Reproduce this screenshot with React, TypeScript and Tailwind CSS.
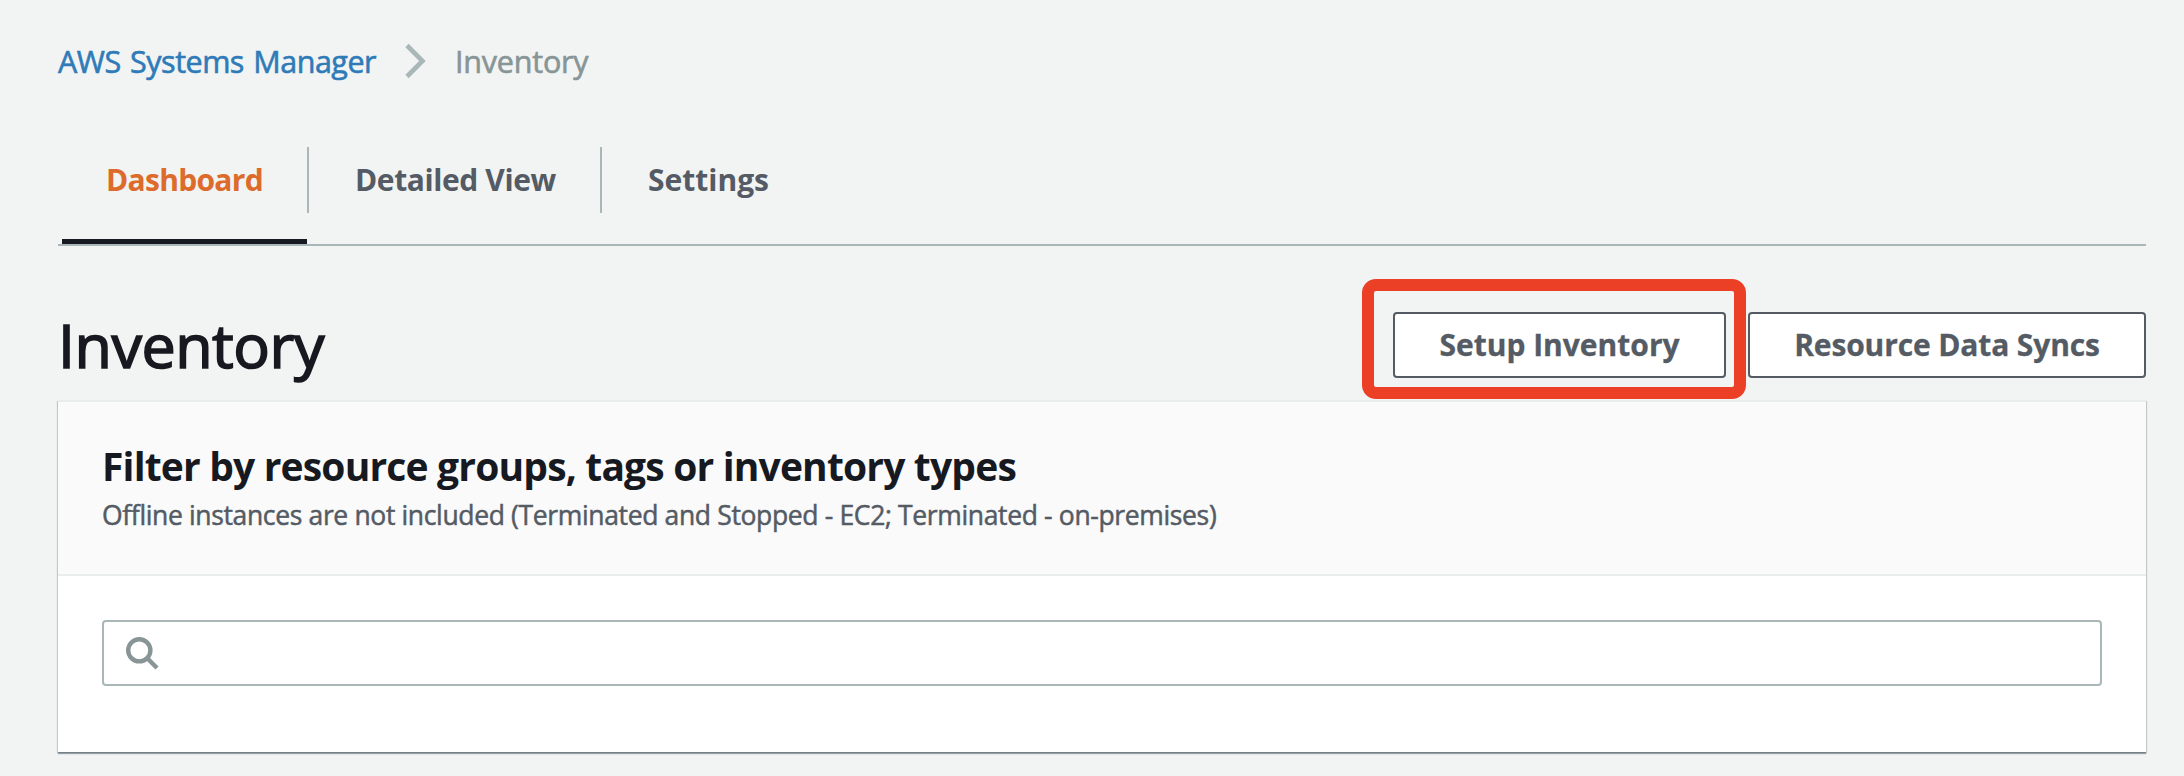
import React from "react";

type Tab = { label: string; tracking: string; box: string; active?: boolean };

const tabs: Tab[] = [
  { label: "Dashboard", tracking: "tracking-[-0.7px]", box: "w-[247px] pl-[44px] border-r-2", active: true },
  { label: "Detailed View", tracking: "tracking-[-0.4px]", box: "w-[293px] pl-[46px] border-r-2" },
  { label: "Settings", tracking: "tracking-normal", box: "w-[200px] pl-[46px]" },
];

function Breadcrumbs() {
  return (
    <nav className="flex h-10 items-center text-[30.5px] leading-10 [-webkit-text-stroke-width:0.6px]">
      <a className="w-[347px] tracking-[-0.5px] text-[#2e7bb8] [word-spacing:2px]">AWS Systems Manager</a>
      <svg className="h-9 w-[22px]" viewBox="0 0 22 36" fill="none">
        <path d="M2 2.5 17.5 18 2 33.5" stroke="#aab7b8" strokeWidth="4.6" />
      </svg>
      <span className="ml-7 tracking-[-0.2px] text-[#879596]">Inventory</span>
    </nav>
  );
}

function TabBar() {
  return (
    <div className="mt-[66px] flex h-[99px] border-b-2 border-[#aab7b8] pl-1">
      {tabs.map((t) => (
        <div key={t.label} className="flex flex-col justify-between">
          <div
            className={`flex h-[66px] items-center border-[#aab7b8] pb-0.5 text-[30px] font-bold whitespace-nowrap ${t.box} ${t.tracking} ${t.active ? "text-[#dd6b2b]" : "text-[#545b64]"}`}
          >
            {t.label}
          </div>
          {t.active && <div className="mr-0.5 h-[5px] bg-[#16191f]" />}
        </div>
      ))}
    </div>
  );
}

const buttonClass =
  "flex h-[66px] items-center justify-center rounded-[4px] border-2 border-[#545b64] bg-white pb-px text-[30px] font-bold whitespace-nowrap text-[#545b64] [-webkit-text-stroke-width:0.3px]";

function SearchIcon() {
  return (
    <svg className="h-9 w-9" viewBox="0 0 36 36" fill="none" stroke="#879596">
      <circle cx="15.3" cy="15.3" r="11.1" strokeWidth="4.4" />
      <path d="M23 23 33 33" strokeWidth="4.4" />
    </svg>
  );
}

export default function App() {
  return (
    <main className="h-[776px] overflow-hidden bg-[#f2f3f3] pt-[41px] pr-[38px] pl-[58px] font-['Open_Sans',sans-serif]">
      <Breadcrumbs />
      <TabBar />
      <header className="mt-[66px] mb-[22px] flex h-[66px] items-center justify-between">
        <h1 className="text-[61px] leading-[66px] tracking-[-0.5px] text-[#16191f] [-webkit-text-stroke-width:1.6px]">Inventory</h1>
        <div className="flex gap-[22px]">
          <div className="relative">
            <button className={`${buttonClass} w-[333px]`}>Setup Inventory</button>
            <div className="pointer-events-none absolute -top-[33px] -left-[31px] h-[120px] w-[384px] rounded-[14px] border-12 border-[#eb4026]" />
          </div>
          <button className={`${buttonClass} w-[398px] tracking-[-0.13px]`}>Resource Data Syncs</button>
        </div>
      </header>
      <section className="h-[352px] border-t-2 border-[#eaeded] bg-white shadow-[0_2px_1px_0_rgba(0,28,36,0.35),1px_1px_1px_0_rgba(0,28,36,0.15),-1px_1px_1px_0_rgba(0,28,36,0.15)]">
        <div className="h-[174px] border-b-2 border-[#eaeded] bg-[#fafafa] px-[44px] pt-10">
          <h2 className="text-[39px] leading-[48px] font-bold tracking-[-0.83px] whitespace-nowrap text-[#16191f]">
            Filter by resource groups, tags or inventory types
          </h2>
          <p className="mt-[9px] text-[26.5px] leading-8 tracking-[-0.355px] whitespace-nowrap text-[#545b64] [-webkit-text-stroke-width:0.5px]">
            Offline instances are not included (Terminated and Stopped - EC2; Terminated - on-premises)
          </p>
        </div>
        <div className="px-[44px] pt-[44px]">
          <div className="flex h-[66px] items-center rounded-[4px] border-2 border-[#aab7b8] bg-white pl-5">
            <SearchIcon />
          </div>
        </div>
      </section>
    </main>
  );
}
